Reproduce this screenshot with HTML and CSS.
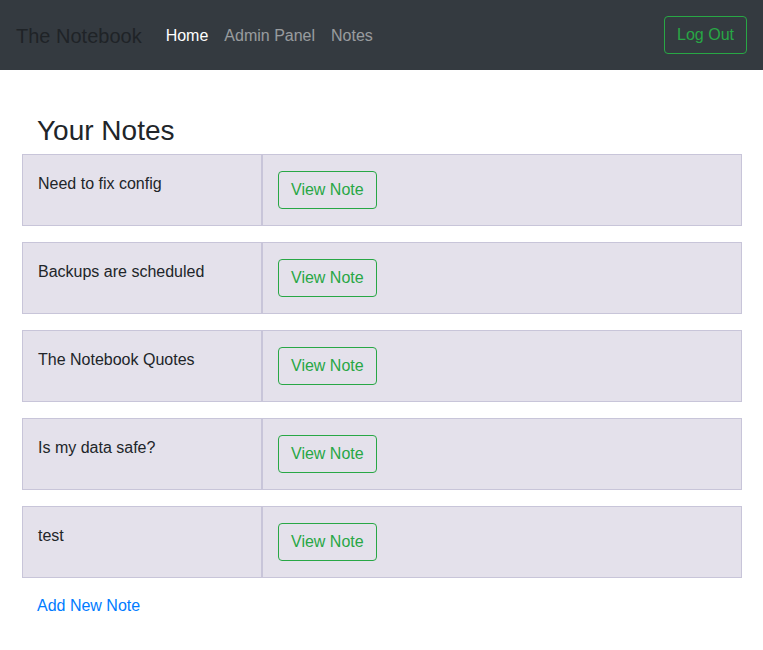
FILE: index.html
```html
<!DOCTYPE html>
<html lang="en">
<head>
<meta charset="utf-8">
<title>The Notebook</title>
<link rel="stylesheet" href="styles.css">
</head>
<body>
<nav class="navbar">
  <a class="brand" href="#">The Notebook</a>
  <ul class="nav">
    <li><a class="nav-link active" href="#">Home</a></li>
    <li><a class="nav-link" href="#">Admin Panel</a></li>
    <li><a class="nav-link" href="#">Notes</a></li>
  </ul>
  <a class="btn-outline" href="#">Log Out</a>
</nav>
<main class="content">
  <h3 class="title">Your Notes</h3>
  <div class="notes">
    <div class="note-row">
      <div class="cell cell-name">Need to fix config</div>
      <div class="cell cell-action"><a class="btn-outline" href="#">View Note</a></div>
    </div>
    <div class="note-row">
      <div class="cell cell-name">Backups are scheduled</div>
      <div class="cell cell-action"><a class="btn-outline" href="#">View Note</a></div>
    </div>
    <div class="note-row">
      <div class="cell cell-name">The Notebook Quotes</div>
      <div class="cell cell-action"><a class="btn-outline" href="#">View Note</a></div>
    </div>
    <div class="note-row">
      <div class="cell cell-name">Is my data safe?</div>
      <div class="cell cell-action"><a class="btn-outline" href="#">View Note</a></div>
    </div>
    <div class="note-row">
      <div class="cell cell-name">test</div>
      <div class="cell cell-action"><a class="btn-outline" href="#">View Note</a></div>
    </div>
  </div>
  <a class="add-link" href="#">Add New Note</a>
</main>
</body>
</html>
```
FILE: styles.css
```css
* { box-sizing: border-box; }
html, body { margin: 0; padding: 0; }
body {
  font-family: "Liberation Sans", Arial, sans-serif;
  font-size: 16px;
  line-height: 1.5;
  color: #212529;
  background: #fff;
}
a { text-decoration: none; }

.navbar {
  display: flex;
  align-items: center;
  height: 70px;
  padding: 16px;
  background: #343a40;
}
.brand {
  font-size: 20px;
  line-height: 30px;
  padding-top: 2px;
  color: #1f2327;
  margin-right: 16px;
}
.nav {
  display: flex;
  list-style: none;
  margin: 0;
  padding: 0;
  flex: 1;
}
.nav-link {
  display: block;
  padding: 9px 8px 7px;
  color: rgba(255, 255, 255, 0.5);
}
.nav-link.active { color: #fff; }

.btn-outline {
  display: inline-block;
  padding: 6px 12px;
  border: 1px solid #28a745;
  border-radius: 4px;
  color: #28a745;
  font-size: 16px;
  line-height: 24px;
}

.content {
  padding: 44px 21px 0 22px;
}
.title {
  margin: 0 0 6px;
  padding-left: 15px;
  font-size: 28px;
  font-weight: 500;
  line-height: 1.2;
}
.notes {
  display: flex;
  flex-direction: column;
  gap: 16px;
}
.note-row {
  display: grid;
  grid-template-columns: 240px 1fr;
  background: #e4e1eb;
}
.cell {
  border: 1px solid #c8c5d9;
  padding: 16px 15px;
}
.cell-name {
  padding-top: 17px;
}
.add-link {
  display: inline-block;
  margin: 16px 0 0 15px;
  color: #007bff;
}
```
